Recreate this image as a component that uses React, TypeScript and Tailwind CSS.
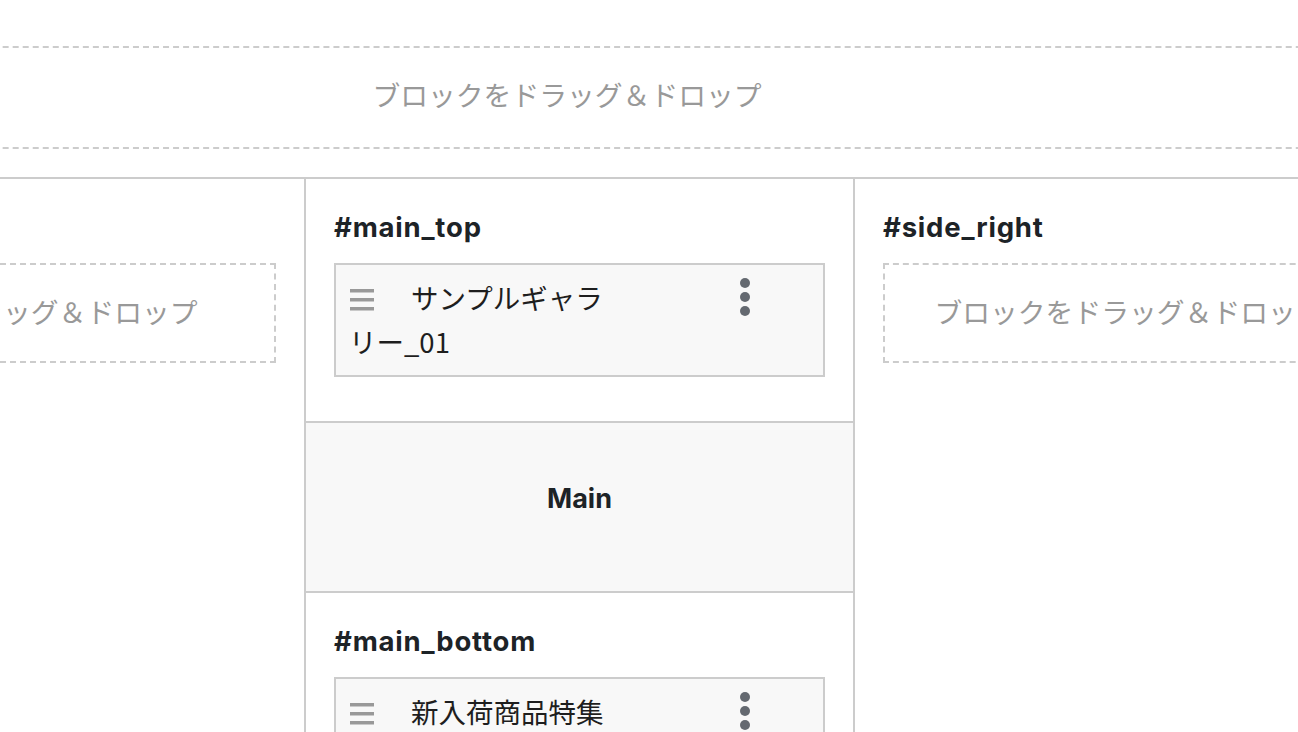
import React from 'react';

const jp = '"Noto Sans CJK JP", "Noto Sans", sans-serif';
const head = 'Inter, "Noto Sans CJK JP", sans-serif';

const Placeholder = ({ className = '' }: { className?: string }) => (
  <div
    className={`flex items-center justify-center text-[27.8px] text-[#999] ${className}`}
    style={{ fontFamily: jp }}
  >
    ブロックをドラッグ＆ドロップ
  </div>
);

const Handle = () => (
  <svg width="26" height="22" viewBox="0 0 26 22" className="inline-block mr-[36px] align-[-2px]">
    <rect x="1" y="0" width="24" height="3.5" fill="#999" />
    <rect x="1" y="9" width="24" height="3.5" fill="#999" />
    <rect x="1" y="18" width="24" height="3.5" fill="#999" />
  </svg>
);

const Kebab = () => (
  <svg width="12" height="40" viewBox="0 0 12 40">
    <circle cx="6" cy="6" r="5" fill="#646970" />
    <circle cx="6" cy="20" r="5" fill="#646970" />
    <circle cx="6" cy="34" r="5" fill="#646970" />
  </svg>
);

const Block = ({ title }: { title: string }) => (
  <div className="flex border-2 border-[#ccc] bg-[#f8f8f8] pt-[10px] pb-[12px] pl-[13px]">
    <div className="w-[272px] text-[27.5px] leading-[44px] text-[#1e1e1e]" style={{ fontFamily: jp }}>
      <Handle />
      {title}
    </div>
    <div className="ml-auto mr-[72px] flex h-[44px] items-center">
      <Kebab />
    </div>
  </div>
);

const Heading = ({ children }: { children: React.ReactNode }) => (
  <h3
    className="h-[36px] pt-[1px] text-[27.5px] font-bold leading-[34px] tracking-[0.8px] text-[#1d2327]"
    style={{ fontFamily: head }}
  >
    {children}
  </h3>
);

export default function App() {
  return (
    <div className="h-[732px] w-[1298px] overflow-hidden bg-white">
      <div className="ml-[-298px] w-[1800px]">
        <div className="h-[46px]" />
        <Placeholder className="ml-[30px] h-[103px] w-[1670px] border-y-2 border-dashed border-[#ccc] pb-[5px]" />

        <div className="mt-[28px] flex border-t-2 border-[#ccc]">
          {/* left column */}
          <div className="w-[604px] border-r-2 border-[#ccc] px-[28px] pt-[84px]">
            <Placeholder className="h-[100px] border-2 border-dashed border-[#ccc] pb-[2px]" />
          </div>

          {/* main column */}
          <div className="w-[549px] border-r-2 border-[#ccc]">
            <div className="border-b-2 border-[#ccc] px-[28px] pt-[30px] pb-[44px]">
              <Heading>#main_top</Heading>
              <div className="mt-[18px]">
                <Block title="サンプルギャラリー_01" />
              </div>
            </div>
            <div className="flex h-[170px] items-center justify-center border-b-2 border-[#ccc] bg-[#f8f8f8] pb-[16px]">
              <span className="text-[27px] font-bold text-[#1d2327]" style={{ fontFamily: head }}>
                Main
              </span>
            </div>
            <div className="px-[28px] pt-[30px] pb-[44px]">
              <Heading>#main_bottom</Heading>
              <div className="mt-[18px]">
                <Block title="新入荷商品特集" />
              </div>
            </div>
          </div>

          {/* right column */}
          <div className="w-[548px] px-[28px] pt-[30px]">
            <Heading>#side_right</Heading>
            <Placeholder className="mt-[18px] h-[100px] border-2 border-dashed border-[#ccc] pb-[2px]" />
          </div>
        </div>
      </div>
    </div>
  );
}
